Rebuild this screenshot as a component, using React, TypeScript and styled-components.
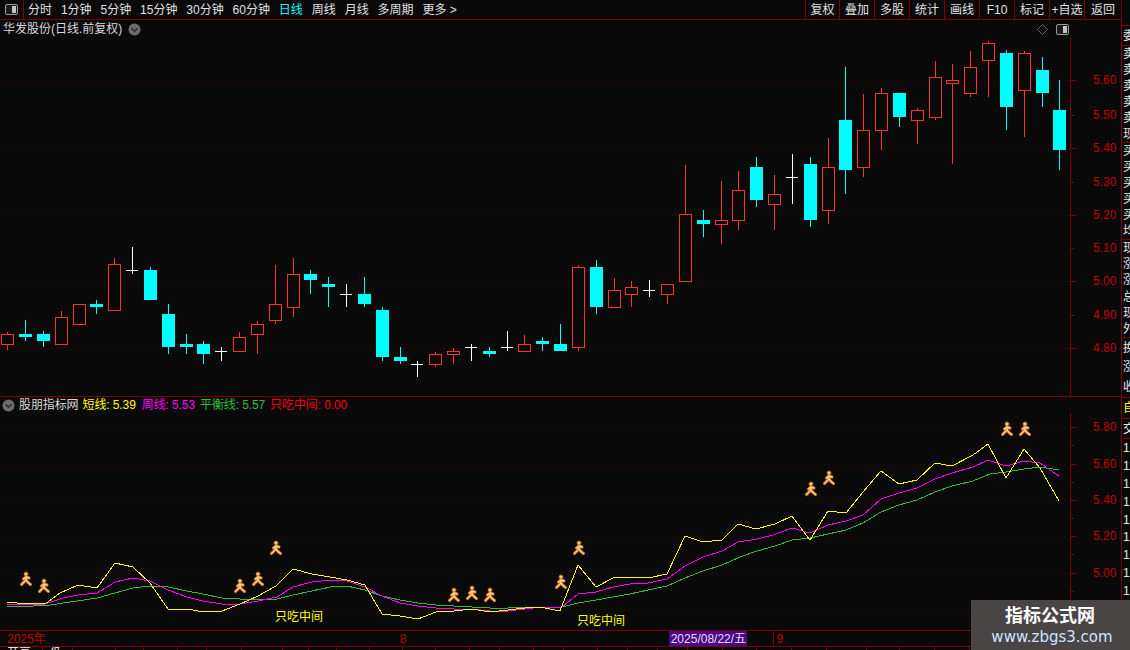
import React from "react";
import styled, { createGlobalStyle } from "styled-components";

const GlobalStyle = createGlobalStyle`
  html, body { margin: 0; padding: 0; background: #0a0a0a; }
  body { font-family: "Liberation Sans", "Noto Sans CJK SC", sans-serif; font-size: 12px; }
`;

const RED = "#800000";
const Screen = styled.div`
  display: flex; width: 1130px; height: 650px; overflow: hidden; position: relative;
  background: #0a0a0a; color: #e0e0e0; line-height: 1;
`;
const LeftColumn = styled.div`
  display: flex; flex-direction: column; width: 1121px; flex: none; border-right: 1px solid ${RED};
`;
const Toolbar = styled.div`
  display: flex; align-items: stretch; justify-content: space-between; height: 19px; flex: none; border-bottom: 1px solid ${RED};
`;
const ToolGroup = styled.div`display: flex; align-items: center;`;
const ToggleCell = styled.div`
  display: flex; align-items: center; justify-content: center; width: 23px; height: 19px; border-right: 1px solid ${RED}; margin-right: 4px;
`;
const Period = styled.span<{ $active?: boolean }>`
  margin-right: 8.9px; white-space: nowrap; color: ${(p) => (p.$active ? "#00ffff" : "#e0e0e0")};
`;
const ActionGroup = styled.div`display: flex;`;
const Action = styled.div<{ $w: number }>`
  display: flex; align-items: center; justify-content: center; width: ${(p) => p.$w}px; height: 19px;
  border-left: 1px solid ${RED}; box-sizing: border-box; white-space: nowrap;
`;
const MainPanel = styled.div`display: flex; flex-direction: column; height: 376px; flex: none; border-bottom: 1px solid ${RED};`;
const MainHead = styled.div`display: flex; align-items: center; height: 18px; flex: none; padding-left: 3px; color: #d8d8d8;`;
const StockName = styled.span`margin-right: 6px; white-space: nowrap;`;
const HeadSpacer = styled.div`flex: 1;`;
const HeadIcons = styled.div`display: flex; align-items: center; gap: 8px; padding-right: 52px;`;
const IndicatorPanel = styled.div`display: flex; flex-direction: column; height: 233px; flex: none; border-bottom: 1px solid ${RED};`;
const LegendRow = styled.div`display: flex; align-items: center; height: 16px; flex: none; padding-left: 2px; letter-spacing: -0.1px;`;
const LegendName = styled.span`margin: 0 4px 0 4px; color: #d8d8d8; white-space: nowrap;`;
const LegendItem = styled.span<{ $color: string; $gap: number }>`
  color: ${(p) => p.$color}; margin-right: ${(p) => p.$gap}px; white-space: nowrap;
`;
const ChartSvg = styled.svg`display: block; flex: 1; min-height: 0; width: 1121px;`;
const AxisLabel = styled.text`fill: #c00000; font-size: 12px;`;
const ChartNote = styled.text`fill: #ffff00; font-size: 12px;`;
const DateAxis = styled.div`
  display: flex; align-items: center; height: 15px; flex: none; border-bottom: 1px solid ${RED}; color: #c00000;
`;
const DateMark = styled.span<{ $left: number }>`margin-left: ${(p) => p.$left}px; white-space: nowrap;`;
const CursorDate = styled.span<{ $left: number }>`
  margin-left: ${(p) => p.$left}px; display: flex; align-items: center; justify-content: center; width: 78px; height: 15px;
  background: #4b0a82; color: #e4dcff; white-space: nowrap;
`;
const MonthMark = styled.span<{ $left: number }>`
  margin-left: ${(p) => p.$left}px; height: 15px; padding-left: 2px; display: flex; align-items: center; border-left: 1px solid ${RED};
`;
const TableStrip = styled.div`display: flex; flex: 1; min-height: 0; overflow: hidden;`;
const TableCell = styled.div<{ $w: number }>`
  width: ${(p) => p.$w}px; flex: none; box-sizing: border-box; border-right: 1px solid ${RED}; padding: 0 0 0 7px;
  line-height: 12px; white-space: nowrap; overflow: hidden; color: #e8e8e8;
`;
const SidePanel = styled.div`display: flex; flex-direction: column; flex: 1; min-width: 0; overflow: hidden; padding-top: 25px;`;
const SideSection = styled.div<{ $h: number; $top?: boolean }>`
  display: flex; flex-direction: column; justify-content: space-around; height: ${(p) => p.$h}px; flex: none; box-sizing: border-box;
  border-bottom: 1px solid ${RED}; ${(p) => (p.$top ? `border-top: 1px solid ${RED};` : "")} padding-left: 1px; overflow: hidden;
`;
const SideRow = styled.div<{ $color?: string }>`
  color: ${(p) => p.$color || "#e8e8e8"}; white-space: nowrap; line-height: 14px; height: 14px;
`;
const Watermark = styled.div`
  position: absolute; right: 0; bottom: 0; width: 159px; height: 50px; background: #4a4545;
  display: flex; flex-direction: column; align-items: center; justify-content: center; gap: 3px;
`;
const WatermarkTitle = styled.div`color: #fff; font-size: 18px; font-weight: 700; line-height: 20px; white-space: nowrap; padding-right: 1px;`;
const WatermarkUrl = styled.div`
  color: #cfe2ff; font-family: "DejaVu Sans", sans-serif; font-size: 15px; line-height: 16px; white-space: nowrap; padding-left: 3px;
`;

type C = [number, number, number, number, number, "r" | "c" | "w"];
const z8: C[] = [
  [22,306,362,313,344,"r"],[76,270,333,312,321,"c"],[130,303,351,312,333,"c"],[184,243,344,262,344,"r"],[238,223,284,223,284,"r"],
  [289,210,252,222,231,"c"],[343,84,242,103,242,"r"],[397,51,132,121,121,"w"],[451,111,210,120,210,"c"],[505,222,372,252,351,"c"],
  [559,312,372,342,351,"c"],[610,333,402,342,372,"c"],[664,351,393,364,364,"w"],[718,306,365,322,365,"r"],[772,273,372,283,314,"r"],
  [826,105,282,223,272,"r"],[880,84,261,133,233,"r"],[931,120,192,132,150,"c"],[985,141,231,162,171,"c"],[1039,162,231,193,193,"w"],
];
const z9: C[] = [
  [13,141,231,192,222,"c"],[67,231,393,240,381,"c"],[121,351,402,381,393,"c"],[172,393,441,403,403,"w"],[226,366,411,373,404,"r"],
  [280,354,402,364,374,"r"],[334,342,393,352,352,"w"],[388,351,381,363,372,"c"],[442,303,363,352,352,"w"],[493,315,366,343,365,"r"],
  [547,321,363,333,342,"c"],[601,282,363,342,363,"c"],[655,105,363,112,353,"r"],[709,90,252,111,231,"c"],[763,144,233,181,233,"r"],
  [814,153,231,172,194,"r"],[868,150,201,181,181,"w"],[922,163,222,163,194,"r"],
];
const z10: C[] = [
  [76,375,723,523,723,"r"],[130,510,591,540,552,"c"],[184,423,612,541,554,"r"],[235,393,570,451,542,"r"],[289,351,501,381,480,"c"],
  [343,405,570,463,494,"r"],[397,342,492,412,412,"w"],[451,351,561,372,540,"c"],[505,294,552,382,512,"r"],[556,81,462,240,390,"c"],
  [610,162,411,271,383,"r"],[664,144,330,160,272,"r"],[718,159,261,159,231,"c"],[772,204,312,211,242,"r"],[826,63,240,112,233,"r"],
  [877,72,372,121,131,"r"],[931,33,171,82,161,"r"],[985,3,171,10,62,"r"],[1039,30,270,39,201,"c"],[1093,33,291,40,152,"r"],
  [1147,51,201,90,159,"c"],[1198,120,390,210,330,"c"],
];
const place = (list: C[], xo: number, yo: number) =>
  list.map(([x, h, l, t, b, k]) => ({
    cx: Math.floor(xo + x / 3),
    high: Math.floor(yo + h / 3),
    low: Math.floor(yo + l / 3),
    top: Math.floor(yo + t / 3),
    bot: Math.floor(yo + b / 3),
    kind: k,
  }));
const candles = [...place(z8, 0, 230), ...place(z9, 360, 230), ...place(z10, 660, 40)];

const Candle: React.FC<{ c: ReturnType<typeof place>[number] }> = ({ c }) => {
  const x = c.cx + 0.5;
  if (c.kind === "w") {
    return (
      <g stroke="#ffffff" strokeWidth={1}>
        <line x1={x} x2={x} y1={c.high} y2={c.low} />
        <line x1={c.cx - 6} x2={c.cx + 6} y1={c.top + 0.5} y2={c.top + 0.5} />
      </g>
    );
  }
  if (c.kind === "c") {
    return (
      <g>
        <line x1={x} x2={x} y1={c.high} y2={c.low} stroke="#00ffff" />
        <rect x={c.cx - 6} y={c.top} width={13} height={Math.max(c.bot - c.top, 1)} fill="#00ffff" />
      </g>
    );
  }
  return (
    <g>
      <line x1={x} x2={x} y1={c.high} y2={c.low} stroke="#ff3232" />
      <rect x={c.cx - 5.5} y={c.top + 0.5} width={12} height={c.bot - c.top} fill="#0a0a0a" stroke="#ff3232" />
    </g>
  );
};

const toPoints = (p: number[][]) => p.map(([x, y]) => `${x},${y}`).join(" ");
const yellow = [[7,602],[17,603],[30,603],[45,604],[60,593],[78,585],[97,588],[115,563],[133,567],[150,583],[168,609],[188,609],[203,612],[222,611],[240,604],[258,596],[276,586],[293,569],[312,574],[330,577],[347,580],[365,585],[382,614],[400,616],[418,619],[436,612],[454,611],[472,609],[490,612],[508,610],[525,608],[540,607],[550,609],[560,611],[578,565],[596,587],[613,578],[630,577],[648,578],[667,574],[685,536],[703,542],[722,540],[738,524],[756,529],[775,524],[792,516],[810,540],[828,511],[846,513],[863,492],[881,471],[899,484],[917,480],[935,463],[952,466],[973,455],[988,444],[1006,478],[1024,449],[1040,468],[1059,501]];
const magenta = [[7,604],[30,605],[45,604],[63,598],[78,595],[97,593],[115,582],[133,578],[150,581],[168,590],[187,597],[203,601],[222,604],[240,604],[258,601],[277,597],[293,587],[312,582],[330,580],[347,581],[365,587],[382,596],[400,603],[418,606],[436,608],[454,609],[472,609],[490,611],[508,611],[525,609],[542,607],[562,607],[578,594],[596,592],[613,587],[630,584],[648,583],[667,579],[685,566],[703,557],[722,551],[738,542],[757,539],[773,535],[792,528],[810,533],[828,525],[846,521],[863,515],[881,499],[899,493],[917,488],[935,479],[952,473],[973,467],[988,460],[1006,466],[1024,461],[1040,463],[1059,476]];
const green = [[7,607],[33,606],[50,605],[77,601],[97,598],[115,593],[133,588],[150,586],[168,587],[187,591],[203,594],[222,598],[240,599],[258,600],[277,599],[293,595],[312,591],[330,587],[347,586],[365,590],[382,596],[400,600],[418,603],[436,605],[454,606],[472,607],[490,608],[508,608],[525,607],[542,607],[562,607],[578,603],[596,600],[613,597],[630,594],[648,590],[667,586],[685,578],[703,571],[722,565],[740,557],[757,551],[775,546],[792,540],[810,538],[828,534],[846,530],[863,523],[881,512],[899,505],[917,500],[935,492],[952,486],[973,481],[990,474],[1006,472],[1024,469],[1040,467],[1059,470]];
const runners = [[26,579],[44,586],[240,586],[258,579],[276,548],[454,595],[472,593],[490,595],[561,582],[579,548],[811,489],[829,478],[1007,429],[1025,429]];

const Runner: React.FC<{ x: number; y: number }> = ({ x, y }) => {
  const d = "M0-2.5V1M0-2L-2.5 0M0-2L3-1M0 1L-4.5 5.5M0 1L2 3.5L4.5 5.5";
  return (
    <g transform={`translate(${x} ${y})`} fill="none" strokeLinecap="round" strokeLinejoin="round">
      <path d={d} stroke="#8a4a12" strokeWidth={3.2} />
      <path d={d} stroke="#f39a3e" strokeWidth={2.4} />
      <path d={d} stroke="#ffd9a0" strokeWidth={1} />
      <circle cx={0} cy={-5} r={2.1} fill="#ffc27a" stroke="#9a5518" strokeWidth={0.7} />
    </g>
  );
};

const PanelIcon = () => (
  <svg width={13} height={11} viewBox="0 0 13 11">
    <rect x={0.5} y={0.5} width={12} height={10} rx={1.5} fill="#1c1c1c" stroke="#999" />
    <rect x={7} y={2} width={4} height={7} fill="#c4c4c4" />
  </svg>
);
const DropDot = () => (
  <svg width={13} height={13} viewBox="0 0 13 13">
    <circle cx={6.5} cy={6.5} r={6} fill="#6c6c6c" />
    <path d="M3.5 5.2L6.5 8.2L9.5 5.2" fill="none" stroke="#2a2a2a" strokeWidth={1.4} />
  </svg>
);
const Diamond = () => (
  <svg width={11} height={11} viewBox="0 0 11 11">
    <path d="M5.5 .5L10.5 5.5L5.5 10.5L.5 5.5Z" fill="none" stroke="#666" />
  </svg>
);

const mainTicks = [[80,"5.60"],[115,"5.50"],[148,"5.40"],[182,"5.30"],[215,"5.20"],[248,"5.10"],[281,"5.00"],[315,"4.90"],[348,"4.80"]] as const;
const subTicks = [[427,"5.80"],[464,"5.60"],[500,"5.40"],[536,"5.20"],[573,"5.00"]] as const;

const periods = ["分时","1分钟","5分钟","15分钟","30分钟","60分钟","日线","周线","月线","多周期","更多 >"];
const actions: [string, number][] = [["复权",34],["叠加",35],["多股",35],["统计",35],["画线",35],["F10",35],["标记",35],["+自选",35],["返回",37]];
const cellWidths = [43,30,43,28,34,29,35,41,26,28,33,33,33,34,30,34,30,34,30,30,30,35,34,35,35,40,33,35,35,35,35,35];
const side1 = ["卖五","卖四","卖三","卖二","卖一","现价"];
const side2 = ["买一","买二","买三","买四","买五","均价"];
const side3 = ["现价","涨跌","涨幅","总手","现手","外盘"];
const side4 = ["换手","涨停","收益"];
const sideNums = Array.from({ length: 12 }, (_, i) => `1${i}.05`);

export default function App() {
  return (
    <Screen>
      <GlobalStyle />
      <LeftColumn>
        <Toolbar>
          <ToolGroup>
            <ToggleCell><PanelIcon /></ToggleCell>
            {periods.map((p) => <Period key={p} $active={p === "日线"}>{p}</Period>)}
          </ToolGroup>
          <ActionGroup>
            {actions.map(([a, w]) => <Action key={a} $w={w}>{a}</Action>)}
          </ActionGroup>
        </Toolbar>
        <MainPanel>
          <MainHead>
            <StockName>华发股份(日线.前复权)</StockName>
            <DropDot />
            <HeadSpacer />
            <HeadIcons><Diamond /><PanelIcon /></HeadIcons>
          </MainHead>
          <ChartSvg viewBox="0 38 1121 358">
            {mainTicks.filter(([, l]) => l !== "5.50" && l !== "5.30" && l !== "5.10" && l !== "4.90").map(([y]) => (
              <line key={y} x1={0} x2={1070} y1={y + 0.5} y2={y + 0.5} stroke="#520404" strokeDasharray="1 3" />
            ))}
            <line x1={1070.5} x2={1070.5} y1={38} y2={396} stroke={RED} />
            {mainTicks.map(([y, l], i) => (
              <g key={l}>
                <line x1={1071} x2={i % 2 ? 1074 : 1076} y1={y + 0.5} y2={y + 0.5} stroke={RED} />
                <AxisLabel x={1093} y={y + 4}>{l}</AxisLabel>
              </g>
            ))}
            {candles.map((c) => <Candle key={c.cx} c={c} />)}
          </ChartSvg>
        </MainPanel>
        <IndicatorPanel>
          <LegendRow>
            <DropDot />
            <LegendName>股朋指标网</LegendName>
            <LegendItem $color="#ffff00" $gap={6}>短线: 5.39</LegendItem>
            <LegendItem $color="#ff00ff" $gap={5}>周线: 5.53</LegendItem>
            <LegendItem $color="#33bb33" $gap={5}>平衡线: 5.57</LegendItem>
            <LegendItem $color="#ff0000" $gap={0}>只吃中间: 0.00</LegendItem>
          </LegendRow>
          <ChartSvg viewBox="0 413 1121 217">
            {[427,464,500,536,573,609].map((y) => (
              <line key={y} x1={0} x2={1067} y1={y + 0.5} y2={y + 0.5} stroke="#520404" strokeDasharray="1 3" />
            ))}
            <line x1={1070.5} x2={1070.5} y1={413} y2={630} stroke={RED} />
            {subTicks.map(([y, l]) => (
              <g key={l}>
                <line x1={1071} x2={1076} y1={y + 0.5} y2={y + 0.5} stroke={RED} />
                <line x1={1071} x2={1074} y1={y + 18.5} y2={y + 18.5} stroke={RED} />
                <AxisLabel x={1093} y={y + 4}>{l}</AxisLabel>
              </g>
            ))}
            <polyline points={toPoints(green)} fill="none" stroke="#33bb33" shapeRendering="crispEdges" />
            <polyline points={toPoints(magenta)} fill="none" stroke="#ff00ff" shapeRendering="crispEdges" />
            <polyline points={toPoints(yellow)} fill="none" stroke="#ffff00" shapeRendering="crispEdges" />
            {runners.map(([x, y]) => <Runner key={x} x={x} y={y} />)}
            <ChartNote x={275} y={621}>只吃中间</ChartNote>
            <ChartNote x={577} y={625}>只吃中间</ChartNote>
          </ChartSvg>
        </IndicatorPanel>
        <DateAxis>
          <DateMark $left={7}>2025年</DateMark>
          <DateMark $left={354}>8</DateMark>
          <CursorDate $left={263}>2025/08/22/五</CursorDate>
          <MonthMark $left={26}>9</MonthMark>
        </DateAxis>
        <TableStrip>
          {cellWidths.map((w, i) => (
            <TableCell key={i} $w={w}>{i === 0 ? "开高" : i === 1 ? "低" : ""}</TableCell>
          ))}
        </TableStrip>
      </LeftColumn>
      <SidePanel>
        <SideSection $h={21} $top><SideRow>委比</SideRow></SideSection>
        <SideSection $h={97}>{side1.map((s) => <SideRow key={s}>{s}</SideRow>)}</SideSection>
        <SideSection $h={97}>{side2.map((s) => <SideRow key={s}>{s}</SideRow>)}</SideSection>
        <SideSection $h={98}>{side3.map((s) => <SideRow key={s}>{s}</SideRow>)}</SideSection>
        <SideSection $h={60}>{side4.map((s) => <SideRow key={s}>{s}</SideRow>)}</SideSection>
        <SideSection $h={21}><SideRow $color="#ffff00">自选</SideRow></SideSection>
        <SideSection $h={20}><SideRow>交易</SideRow></SideSection>
        <SideSection $h={216}>{sideNums.map((s) => <SideRow key={s}>{s}</SideRow>)}</SideSection>
      </SidePanel>
      <Watermark>
        <WatermarkTitle>指标公式网</WatermarkTitle>
        <WatermarkUrl>www.zbgs3.com</WatermarkUrl>
      </Watermark>
    </Screen>
  );
}
